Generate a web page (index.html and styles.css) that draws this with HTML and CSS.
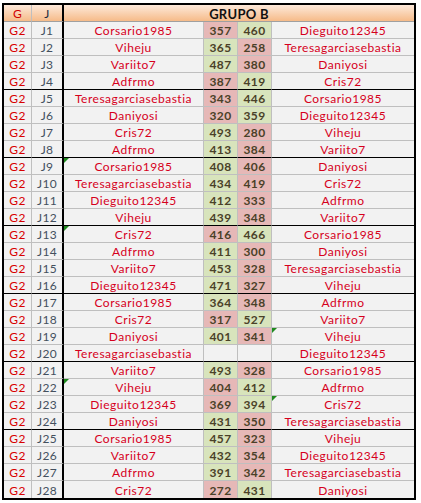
FILE: index.html
```html
<!DOCTYPE html>
<html>
<head>
<meta charset="utf-8">
<link rel="stylesheet" href="styles.css">
</head>
<body>
<div class="sheet">
  <div class="row head">
    <div class="c hg">G</div><div class="c hj">J</div><div class="c htitle">GRUPO B</div>
  </div>
  <div class="row"><div class="c g">G2</div><div class="c j">J1</div><div class="c n">Corsario1985</div><div class="c s lo">357</div><div class="c s hi">460</div><div class="c n">Dieguito12345</div></div>
  <div class="row"><div class="c g">G2</div><div class="c j">J2</div><div class="c n">Viheju</div><div class="c s hi">365</div><div class="c s lo">258</div><div class="c n">Teresagarciasebastia</div></div>
  <div class="row"><div class="c g">G2</div><div class="c j">J3</div><div class="c n">Variito7</div><div class="c s hi">487</div><div class="c s lo">380</div><div class="c n">Daniyosi</div></div>
  <div class="row end"><div class="c g">G2</div><div class="c j">J4</div><div class="c n">Adfrmo</div><div class="c s lo">387</div><div class="c s hi">419</div><div class="c n">Cris72</div></div>
  <div class="row"><div class="c g">G2</div><div class="c j">J5</div><div class="c n">Teresagarciasebastia</div><div class="c s lo">343</div><div class="c s hi">446</div><div class="c n">Corsario1985</div></div>
  <div class="row"><div class="c g">G2</div><div class="c j">J6</div><div class="c n">Daniyosi</div><div class="c s lo">320</div><div class="c s hi">359</div><div class="c n">Dieguito12345</div></div>
  <div class="row"><div class="c g">G2</div><div class="c j">J7</div><div class="c n">Cris72</div><div class="c s hi">493</div><div class="c s lo">280</div><div class="c n">Viheju</div></div>
  <div class="row end"><div class="c g">G2</div><div class="c j">J8</div><div class="c n">Adfrmo</div><div class="c s hi">413</div><div class="c s lo">384</div><div class="c n">Variito7</div></div>
  <div class="row"><div class="c g">G2</div><div class="c j">J9</div><div class="c n tri">Corsario1985</div><div class="c s hi">408</div><div class="c s lo">406</div><div class="c n">Daniyosi</div></div>
  <div class="row"><div class="c g">G2</div><div class="c j">J10</div><div class="c n">Teresagarciasebastia</div><div class="c s hi">434</div><div class="c s lo">419</div><div class="c n">Cris72</div></div>
  <div class="row"><div class="c g">G2</div><div class="c j">J11</div><div class="c n">Dieguito12345</div><div class="c s hi">412</div><div class="c s lo">333</div><div class="c n">Adfrmo</div></div>
  <div class="row end"><div class="c g">G2</div><div class="c j">J12</div><div class="c n">Viheju</div><div class="c s hi">439</div><div class="c s lo">348</div><div class="c n">Variito7</div></div>
  <div class="row"><div class="c g">G2</div><div class="c j">J13</div><div class="c n tri">Cris72</div><div class="c s lo">416</div><div class="c s hi">466</div><div class="c n">Corsario1985</div></div>
  <div class="row"><div class="c g">G2</div><div class="c j">J14</div><div class="c n">Adfrmo</div><div class="c s hi">411</div><div class="c s lo">300</div><div class="c n">Daniyosi</div></div>
  <div class="row"><div class="c g">G2</div><div class="c j">J15</div><div class="c n">Variito7</div><div class="c s hi">453</div><div class="c s lo">328</div><div class="c n">Teresagarciasebastia</div></div>
  <div class="row end"><div class="c g">G2</div><div class="c j">J16</div><div class="c n">Dieguito12345</div><div class="c s hi">471</div><div class="c s lo">327</div><div class="c n">Viheju</div></div>
  <div class="row"><div class="c g">G2</div><div class="c j">J17</div><div class="c n">Corsario1985</div><div class="c s hi">364</div><div class="c s lo">348</div><div class="c n">Adfrmo</div></div>
  <div class="row"><div class="c g">G2</div><div class="c j">J18</div><div class="c n">Cris72</div><div class="c s lo">317</div><div class="c s hi">527</div><div class="c n">Variito7</div></div>
  <div class="row"><div class="c g">G2</div><div class="c j">J19</div><div class="c n">Daniyosi</div><div class="c s hi">401</div><div class="c s lo">341</div><div class="c n tri">Viheju</div></div>
  <div class="row end"><div class="c g">G2</div><div class="c j">J20</div><div class="c n">Teresagarciasebastia</div><div class="c s"></div><div class="c s"></div><div class="c n">Dieguito12345</div></div>
  <div class="row"><div class="c g">G2</div><div class="c j">J21</div><div class="c n">Variito7</div><div class="c s hi">493</div><div class="c s lo">328</div><div class="c n">Corsario1985</div></div>
  <div class="row"><div class="c g">G2</div><div class="c j">J22</div><div class="c n tri">Viheju</div><div class="c s lo">404</div><div class="c s hi">412</div><div class="c n">Adfrmo</div></div>
  <div class="row"><div class="c g">G2</div><div class="c j">J23</div><div class="c n">Dieguito12345</div><div class="c s lo">369</div><div class="c s hi">394</div><div class="c n tri">Cris72</div></div>
  <div class="row end"><div class="c g">G2</div><div class="c j">J24</div><div class="c n">Daniyosi</div><div class="c s hi">431</div><div class="c s lo">350</div><div class="c n">Teresagarciasebastia</div></div>
  <div class="row"><div class="c g">G2</div><div class="c j">J25</div><div class="c n">Corsario1985</div><div class="c s hi">457</div><div class="c s lo">323</div><div class="c n">Viheju</div></div>
  <div class="row"><div class="c g">G2</div><div class="c j">J26</div><div class="c n">Variito7</div><div class="c s hi">432</div><div class="c s lo">354</div><div class="c n">Dieguito12345</div></div>
  <div class="row"><div class="c g">G2</div><div class="c j">J27</div><div class="c n">Adfrmo</div><div class="c s hi">391</div><div class="c s lo">342</div><div class="c n">Teresagarciasebastia</div></div>
  <div class="row last"><div class="c g">G2</div><div class="c j">J28</div><div class="c n">Cris72</div><div class="c s lo">272</div><div class="c s hi">431</div><div class="c n">Daniyosi</div></div>
</div>
</body>
</html>
```

FILE: styles.css
```css
html, body {
  margin: 0;
  padding: 0;
  background: #ffffff;
}
body {
  padding: 3px 0 0 2px;
  font-family: Lato, "Open Sans", sans-serif;
  font-size: 12px;
}
.sheet {
  display: grid;
  grid-template-columns: 28px 32px 140px 34px 34px 142px;
  grid-auto-rows: 17px;
  width: max-content;
  border: 2px solid #000;
}
.row {
  display: contents;
}
.c {
  position: relative;
  display: flex;
  align-items: center;
  justify-content: center;
  box-sizing: border-box;
  background: #f2f2f2;
  border-right: 1px solid #bfbfbf;
  border-bottom: 1px solid #bfbfbf;
  padding-top: 1px;
  white-space: nowrap;
  letter-spacing: 0.3px;
}
.row > .c:last-child {
  border-right: none;
}
.row.end > .c {
  border-bottom-color: #000;
}
.row.last > .c {
  border-bottom: none;
}
.c.j,
.head .hj {
  border-right: 2px solid #000;
}
.head .c {
  background: linear-gradient(#fde9da, #f6bb89);
  border-bottom-color: #a0a0a0;
}
.hg {
  color: #d00000;
}
.hj {
  color: #1c2a40;
}
.htitle {
  grid-column: span 4;
  font-weight: 700;
  font-size: 13px;
  color: #111;
}
.g {
  color: #d80000;
}
.j {
  color: #44505e;
}
.n {
  color: #d6001c;
  letter-spacing: 0.5px;
}
.s {
  font-weight: 700;
  color: #4a4128;
}
.s.lo {
  background: #e6b8b7;
}
.s.hi {
  background: #d8e4bc;
}
.tri::before {
  content: "";
  position: absolute;
  left: 0;
  top: 0;
  border-top: 5px solid #1f8a1f;
  border-right: 5px solid transparent;
}
```
